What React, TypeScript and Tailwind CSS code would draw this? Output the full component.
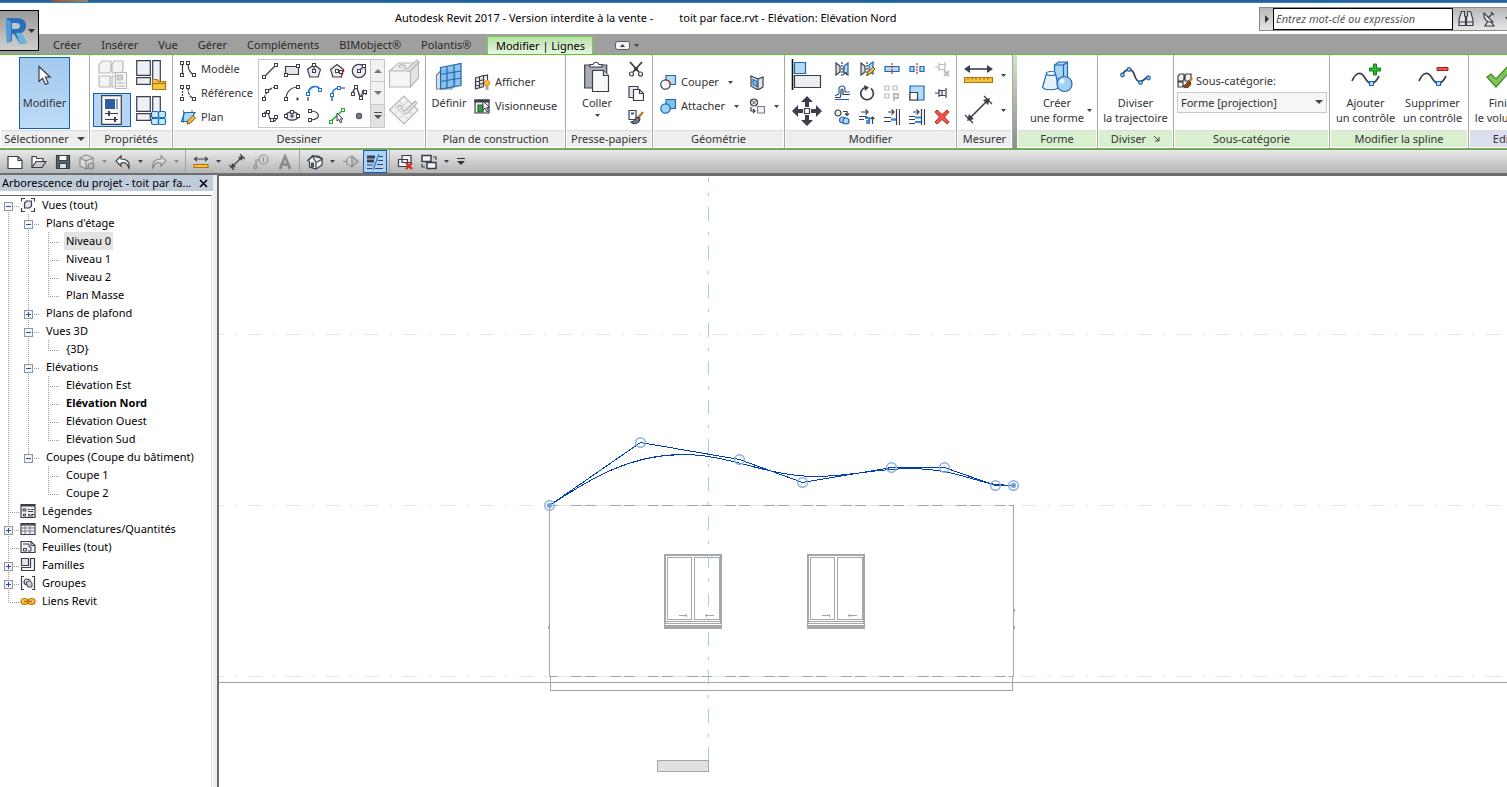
import { useState } from "react";
import type { ReactNode } from "react";
import clsx from "clsx";

const DARK = "#3a3f4b";
const BLUE = "#1b69b6";
const PALE = "#b5daf2";
const MUTE = "#b9b9b9";

interface IconProps {
  w?: number;
  h?: number;
  children: ReactNode;
}

function Icon({ w = 16, h = 16, children }: IconProps) {
  return (
    <svg
      width={w}
      height={h}
      viewBox={`0 0 ${w} ${h}`}
      fill="none"
      stroke={DARK}
      strokeWidth={1.2}
      className="shrink-0"
      aria-hidden="true"
    >
      {children}
    </svg>
  );
}

// Small square handle used by the sketch icons
function Node({ x, y, c = DARK }: { x: number; y: number; c?: string }) {
  return <rect x={x - 1.5} y={y - 1.5} width={3} height={3} fill="#fff" stroke={c} strokeWidth={1} />;
}

function Caret({ muted = false }: { muted?: boolean }) {
  return (
    <svg width={5} height={3} viewBox="0 0 5 3" className="shrink-0" aria-hidden="true">
      <path d="M0 0h5L2.5 3z" fill={muted ? "#8a8a8a" : "#444"} />
    </svg>
  );
}

/* ---------- ribbon icons ---------- */

const cursorIcon = (
  <Icon w={16} h={22}>
    <path d="M2 1.5v15l3.6-3.2 2.8 6.2 2.8-1.3-2.8-6h4.8z" fill="#fff" />
  </Icon>
);

const familyTypesIcon = (
  <Icon w={32} h={32}>
    <g stroke={MUTE} fill="#f4f4f4" strokeLinejoin="round">
      <path d="M2 6l3-4h9v9l-2 3H2zM15 6l2-4h9v9l-2 3h-9z" />
      <path d="M2 17h11v11H3l-1-2zM15 17h9v11h-9z" />
      <path d="M18.5 13.5h11v16h-11z" fill="#fafafa" />
      <path d="M20.5 16h5v5h-5z" fill="#d2d2d2" />
      <path d="M20 24h8M20 27h8M23 23v2M25 26v2" />
    </g>
  </Icon>
);

function PanesBase() {
  return (
    <g fill="#eef0f5">
      <path d="M1.7 1.7h13.6v14.6H1.7z" />
      <path d="M17.7 1.7h7.6v23.6h-7.6z" />
      <path d="M1.7 18.7h13.6v6.6H1.7z" />
    </g>
  );
}

const familyFolderIcon = (
  <Icon w={32} h={32}>
    <PanesBase />
    <path d="M17.5 30.5V20.5h4.5l1.5 2h7v8z" fill="#f3c648" stroke="#b0750e" />
    <path d="M18 24.5h12.5" stroke="#b0750e" />
  </Icon>
);

const propertiesIcon = (
  <Icon w={24} h={32}>
    <path d="M1.7 1.7h19.6v28.6H1.7z" fill="#fafafa" />
    <path d="M5 5h10v10H5z" fill="#2d5f9e" stroke="none" />
    <path d="M16 5h2v10h-2z" fill="#8ba6c8" stroke="none" />
    <path d="M5 19.5h13M5 25.5h13" />
    <path d="M9 17v5M15 23v5" strokeWidth={2} />
  </Icon>
);

const familyCategoriesIcon = (
  <Icon w={32} h={32}>
    <PanesBase />
    <g fill="#c9ecfb" stroke={BLUE}>
      <rect x="16.5" y="16.5" width="7" height="6" rx="1.5" />
      <rect x="23.5" y="16.5" width="7" height="6" rx="1.5" />
      <rect x="16.5" y="23.5" width="7" height="6" rx="1.5" />
      <rect x="23.5" y="23.5" width="7" height="6" rx="1.5" />
    </g>
  </Icon>
);

const modelIcon = (
  <Icon>
    <path d="M2.5 3v11M8 3c0 6 2 9 6 11" />
    <Node x={2} y={2} /><Node x={2} y={14} /><Node x={8} y={2} /><Node x={14} y={14} />
  </Icon>
);

const referenceIcon = (
  <Icon>
    <path d="M2.5 3v11" strokeDasharray="2 1" />
    <path d="M8 3c0 6 2 9 6 11" strokeDasharray="3 1" />
    <Node x={2} y={2} /><Node x={2} y={14} /><Node x={8} y={2} /><Node x={14} y={14} />
  </Icon>
);

const planIcon = (
  <Icon>
    <path d="M4.5 3.5h10l-3 9h-10z" fill="#a9d8f5" stroke={BLUE} />
    <path d="M3.5 1v13M1 12.5h11M12 3V1M16 3.5h-3" strokeWidth={0.8} stroke={BLUE} />
    <path d="M7 15l1-3.5 5-5 2.5 2.5-5 5z" fill="#f5b83a" stroke="#8d5713" strokeWidth={1} />
  </Icon>
);

const drawIcons: { label: string; art: ReactNode }[] = [
  { label: "Ligne", art: <><path d="M2 14L14 2" /><Node x={2} y={14} /><Node x={14} y={2} /></> },
  { label: "Rectangle", art: <><path d="M1.5 3.5h13v8h-13z" fill="#e4e6ec" /><Node x={2} y={12} /><Node x={14} y={3} /></> },
  { label: "Polygone inscrit", art: <><path d="M8 1.5l6.5 5-2.4 7.5H3.9L1.5 6.5z" fill="#e9ebf0" /><path d="M8 2v6" /><Node x={8} y={2} /><Node x={8} y={8} /></> },
  { label: "Polygone circonscrit", art: <><path d="M8 1.5l6.5 5-2.4 7.5H3.9L1.5 6.5z" fill="#e9ebf0" /><path d="M9 8l4 2" /><path d="M15 7l-3 8" stroke="#e11" strokeDasharray="2 1" /><Node x={8} y={8} /><Node x={12} y={9} /></> },
  { label: "Cercle", art: <><circle cx="8" cy="8" r="6.7" fill="#e9ebf0" /><path d="M8 8l4-4" /><Node x={8} y={8} /><Node x={13} y={3} /></> },
  { label: "Arc début-fin-rayon", art: <><path d="M2 14C3 8 7 3 14 2" strokeDasharray="4 1" /><Node x={2} y={14} /><Node x={5} y={6} /><Node x={14} y={2} /></> },
  { label: "Arc centre et extrémités", art: <><path d="M2 14C2 7 7 2 14 2M12 14h3M13.5 12.5v3" /><Node x={2} y={14} /><Node x={14} y={2} /></> },
  { label: "Arc tangent", art: <><path d="M2 10C2 0 14-1 14 6" stroke="#1c77cf" strokeWidth={1.6} /><path d="M2 12v4" /><Node x={2} y={9} c="#1c77cf" /><Node x={14} y={5} c="#1c77cf" /></> },
  { label: "Arc de congé", art: <><path d="M3 11C3 6 6 3 10 3" stroke="#1c77cf" strokeWidth={1.6} /><path d="M3 12v4M12 3h4" /><Node x={3} y={10} c="#1c77cf" /><Node x={10} y={3} c="#1c77cf" /></> },
  { label: "Spline", art: <><path d="M1 9c3-8 5-8 6-3s3 9 4 3 2-4 4 1" /><path d="M1 9l4-7 5 10 5-5" strokeWidth={0.8} /><Node x={2} y={9} /><Node x={5} y={2} /><Node x={10} y={13} /><Node x={14} y={7} /></> },
  { label: "Spline par points", art: <><path d="M1 8c2-6 5-5 6 0s5 8 8 2" /><Node x={2} y={7} /><Node x={6} y={4} /><Node x={10} y={12} /><Node x={14} y={9} /></> },
  { label: "Ellipse", art: <><ellipse cx="8" cy="8" rx="6.5" ry="4.2" fill="#e9ebf0" /><path d="M8 6v4M6 8h4" /><Node x={8} y={4} /><Node x={14} y={8} /><Node x={2} y={8} /></> },
  { label: "Ellipse partielle", art: <><path d="M4 3c10 0 12 8 1 9" /><Node x={4} y={3} /><Node x={4} y={12} /></> },
  { label: "Choisir des lignes", art: <><path d="M1 14L14 2" stroke="#1fae2c" strokeWidth={1.6} /><Node x={2} y={14} c="#1fae2c" /><Node x={14} y={2} c="#1fae2c" /><path d="M8 5v8l2-1.6 1.4 3.4 1.5-.7-1.4-3.2H14z" fill="#fff" strokeWidth={1} /></> },
  { label: "Point", art: <circle cx="8" cy="8" r="2.6" fill="#7c828c" stroke="#555a63" /> },
];

const drawOnFaceIcon = (
  <Icon w={32} h={32}>
    <g stroke={MUTE} fill="#f1f1f1">
      <path d="M1.5 13l9-8h20l-8 8z" />
      <path d="M1.5 13h21v16h-21z" fill="#f5f5f5" />
      <path d="M22.5 29l8-9V5l-8 8z" fill="#e4e4e4" />
      <path d="M11 10c-1-3 2-4 5-3s-1 4 3 4l10-9 2 2-9 9-3 0" fill="#e2e2e2" />
    </g>
  </Icon>
);

const drawOnWorkplaneIcon = (
  <Icon w={32} h={32}>
    <g stroke={MUTE}>
      <path d="M1.5 16L16 2l14 14-14 14z" fill="#f1f1f1" />
      <path d="M6 11l14 14M11 7l14 14M6 21L20 7M11 25L25 11" strokeWidth={0.7} />
      <path d="M9 13c2-3 5-2 5 1s2 4 5 1l8-8 2 2-9 10-4 1" fill="#e2e2e2" />
    </g>
  </Icon>
);

const setPlaneIcon = (
  <Icon w={28} h={30}>
    <path d="M1.5 13l4-4h15v13l-4 5h-15z" fill="#dfe4ec" stroke="#7a8494" />
    <path d="M5.5 5.5L26 1.5v22L5.5 27z" fill="#73b6e6" fillOpacity={0.8} stroke={BLUE} />
    <path d="M12 4.2v22M19 3v22M5.5 12.5L26 9M5.5 19.5l20.5-3.5" stroke={BLUE} />
  </Icon>
);

const showPlaneIcon = (
  <Icon>
    <path d="M1.5 4l8-2.5v11L1.5 15zM1.5 8l9-2.5M1.5 11.5l9-2.5M5.5 3v11M9.5 2l4-1v5" fill="#ececec" />
    <circle cx="13" cy="9" r="2.5" fill="#ffc43c" stroke="#f08a1c" />
    <path d="M11.5 13h3M11.5 15h3" stroke="#555" />
  </Icon>
);

const viewerIcon = (
  <Icon>
    <path d="M1 2h14v13H1z" fill="#eceef0" />
    <path d="M1 2h14v2H1z" fill={DARK} />
    <path d="M4 7h5v7H4z" fill="#3c9a48" stroke="#1c6e2a" />
    <path d="M9 3v9l2-2 2 4 1.5-.8-2-3.7h3z" fill="#fff" strokeWidth={1} />
  </Icon>
);

const pasteIcon = (
  <Icon w={28} h={32}>
    <path d="M1.7 4h22v23h-22z" fill="#a9adb6" />
    <path d="M7 6V3.5h3c1-3 5-3 6 0h3V6z" fill="#fff" />
    <path d="M9.5 9.5h11l5 5v16h-16z" fill="#f7f8fa" />
    <path d="M20.5 9.5v5h5" fill="#dcdfe5" />
  </Icon>
);

const cutIcon = (
  <Icon>
    <path d="M2 1l9 10M14 1L5 11" strokeWidth={1.8} />
    <circle cx="3.5" cy="13" r="2" /><circle cx="12.5" cy="13" r="2" />
    <circle cx="8" cy="8" r="1.4" fill={DARK} />
  </Icon>
);

const copyIcon = (
  <Icon>
    <path d="M1 1.5h9v11H1z" fill="#e8e9ed" />
    <path d="M5.5 4.5h6l4 4v7h-10z" fill="#fff" /><path d="M11.5 4.5v4h4" />
  </Icon>
);

const matchIcon = (
  <Icon>
    <path d="M1 1.5h7v9H1z" fill="#fff" /><path d="M3 3.5h3v2H3z" fill={BLUE} stroke="none" />
    <path d="M15 3l-5 6" stroke="#c07a2c" strokeWidth={2.4} />
    <path d="M10 8c-3 0-3 5-7 5 2 3 8 2 9-3z" fill="#737985" />
  </Icon>
);

const cutGeometryIcon = (
  <Icon>
    <path d="M6 1.5h9.5v9H6z" fill={PALE} stroke={BLUE} />
    <circle cx="5.5" cy="10.5" r="4.7" fill="#fff" />
    <path d="M5.5 5.8a4.7 4.7 0 0 1 4.7 4.7" stroke="#e21a1a" />
  </Icon>
);

const joinGeometryIcon = (
  <Icon>
    <path d="M6 1.5h9.5v9H6z" fill="#7fc0ea" stroke={BLUE} />
    <circle cx="5.5" cy="10.5" r="4.7" fill="#9ed2f2" stroke={BLUE} />
  </Icon>
);

const copingIcon = (
  <Icon>
    <path d="M2 2l7 3 5-2v10l-5 3-7-4zM9 5v10" fill="#e4e6eb" />
    <path d="M4 5.5l4 2v5l-4-2z" fill="#8ac7ef" stroke={BLUE} />
  </Icon>
);

const splitFaceIcon = (
  <Icon>
    <circle cx="5" cy="4.5" r="3.5" fill="#eee" /><path d="M2.5 2l5 5M7.5 2l-5 5" strokeWidth={0.9} />
    <path d="M8.5 8.5h7v6.5h-7z" fill="#f2f2f4" stroke="#777d88" />
    <path d="M2 9v4h4M4 11l2 2-2 2" />
  </Icon>
);

const alignIcon = (
  <Icon w={32} h={32}>
    <path d="M1.5 0v31" stroke="#111" strokeWidth={1.6} />
    <path d="M3.5 3.5h11v11h-11z" fill={PALE} stroke={BLUE} />
    <path d="M3.5 16.5h26v12h-26z" fill="#eceef2" />
  </Icon>
);

const moveIcon = (
  <Icon w={32} h={32}>
    <g fill={DARK} stroke="none">
      <path d="M16 1l6 6h-4v5h-4V7h-4zM16 31l6-6h-4v-5h-4v5h-4zM1 16l6-6v4h5v4H7v4zM31 16l-6-6v4h-5v4h5v4z" />
    </g>
    <path d="M13.5 13.5h5v5h-5z" fill="#fff" />
  </Icon>
);

const modifyIcons: { label: string; art: ReactNode; muted?: boolean }[] = [
  { label: "Symétrie - Choisir l'axe", art: <><path d="M2 2v12l4-3V5z" fill="#d9dce2" /><path d="M8 1v14" strokeDasharray="2 1" /><path d="M14 2v12l-4-3V5z" fill={PALE} stroke={BLUE} /><path d="M10 6v7l2-1.5 1 2.5" fill="#fff" /></> },
  { label: "Symétrie - Dessiner l'axe", art: <><path d="M2 2v12l4-3V5z" fill="#d9dce2" /><path d="M8 1v14" strokeDasharray="2 1" /><path d="M14 1v12l-4-3V4z" fill={PALE} stroke={BLUE} /><path d="M8 14l1-3 5-5 2 2-5 5z" fill="#f5b83a" stroke="#8d5713" strokeWidth={1} /></> },
  { label: "Scinder l'élément", art: <><path d="M1 5.5h14v5H1z" fill={PALE} stroke={BLUE} /><path d="M8 2v12" stroke="#d22" strokeDasharray="2 1" /></> },
  { label: "Scinder avec espace", art: <><path d="M1 5.5h4v5H1zM11 5.5h4v5h-4z" fill={PALE} stroke={BLUE} /><path d="M8 2v12" stroke="#d22" strokeDasharray="2 1" /></> },
  { label: "Déverrouiller", muted: true, art: <><path d="M1 6h4M5 2v8M5 3.5h6M5 8.5h6M11 1v9" /><path d="M10 10l5 5M15 10l-5 5" strokeWidth={2} /></> },
  { label: "Décaler", art: <><path d="M1 14.5h14M1 11c1-2 4 0 4-3V4c0-4 6-4 6 0v3h5" stroke={BLUE} /><path d="M1 12.5h5c1-1 1-3 1-7 0-2 2-2 2 0v4h7" /></> },
  { label: "Rotation", art: <><path d="M12 3.5A6.3 6.3 0 1 1 6 2.5" strokeWidth={1.7} /><path d="M5 0l5 2.5L6 6z" fill={DARK} stroke="none" /></> },
  { label: "Réseau", muted: true, art: <><path d="M1 1h4v4H1zM9 1h4v4H9zM1 9h4v4H1z" /><path d="M10 16V9h4v4h-4" strokeWidth={2} /></> },
  { label: "Echelle", art: <><path d="M1 1h14v14H1z" fill={PALE} stroke={BLUE} /><path d="M1 7.5h7.5V15H1z" fill="#fff" /></> },
  { label: "Verrouiller", art: <><path d="M1 8h4M5 4v8M5 5.5h6M5 10.5h6M12 3v10M8 6v4" /></> },
  { label: "Copier", art: <><circle cx="4" cy="4" r="3" fill="#eee" /><circle cx="8.5" cy="11" r="3" fill={PALE} stroke={BLUE} /><circle cx="12" cy="12" r="3" fill={PALE} stroke={BLUE} /><path d="M9 2.5h4v4M11 4.5l2 2 2-2" /></> },
  { label: "Ajuster en angle", art: <><path d="M2 3h7M6.5.5L9 3 6.5 5.5" /><path d="M0 7.5h8M0 10.5h5M8 15v-4" /><path d="M6 9h4v6" stroke="#2c8ce0" strokeWidth={2} /><path d="M13.5 15V8M11.5 10l2-2 2 2" /></> },
  { label: "Ajuster un élément", art: <><path d="M4 3h6M7.5.5L10 3 7.5 5.5M12.5 0v16M15.5 0v16M0 8.5h7M0 12.5h7" /><path d="M7 10.5h5" stroke="#2c8ce0" strokeWidth={2.4} /></> },
  { label: "Ajuster plusieurs éléments", art: <><path d="M4 3h6M7.5.5L10 3 7.5 5.5M12.5 0v16M15.5 0v16M0 7.5h6M0 10.5h6M0 14.5h6" /><path d="M6 8.5h6M6 13h6" stroke="#2c8ce0" strokeWidth={2} /></> },
  { label: "Supprimer", art: <><path d="M3 1l5 4.5L13 1l2 2-4.5 5 4.5 5-2 2-5-4.5L3 15l-2-2 4.5-5L1 3z" fill="#ef5548" stroke="#b3261c" strokeWidth={1} /></> },
];

const measureIcon = (
  <Icon w={32} h={22}>
    <path d="M3 5h25" strokeWidth={1.6} />
    <path d="M1 5l6-4v8zM30 5l-6-4v8z" fill={DARK} stroke="none" />
    <path d="M1.5 13.5h28v5h-28z" fill="#f6c13c" stroke="#b0750e" />
    <path d="M5 14v2M9 14v2M13 14v2M17 14v2M21 14v2M25 14v2" stroke="#b0750e" strokeWidth={1} />
  </Icon>
);

const dimensionIcon = (
  <Icon w={32} h={32}>
    <path d="M6 25L25 6" strokeWidth={1.6} />
    <path d="M2 21l8 8M21 2l8 8" />
    <path d="M4 27l2-7 5 5zM27 4l-7 2 5 5z" fill={DARK} stroke="none" />
  </Icon>
);

const createFormIcon = (
  <Icon w={32} h={32}>
    <path d="M13.5 4l4-3h9v17h-13z" fill="#a9d5f1" stroke={BLUE} />
    <path d="M13.5 4h9v14M22.5 4l4-3" stroke={BLUE} />
    <path d="M5.5 12.5h9l3 14c-2 3-14 3-16 0z" fill="#e6f2fa" stroke={BLUE} />
    <ellipse cx="10" cy="12.5" rx="4.5" ry="2" fill="#fff" stroke={BLUE} />
    <circle cx="23.5" cy="23" r="7.5" fill="#a4d1f0" stroke={BLUE} />
    <circle cx="21" cy="20" r="2.5" fill="#e6f5fd" stroke="none" />
  </Icon>
);

const dividePathIcon = (
  <Icon w={32} h={20}>
    <path d="M2 8c4-7 10-7 12-1s4 9 8 7 4-4 7-5" strokeWidth={1.7} />
    <g fill="#9fd1f4" stroke={BLUE}>
      <circle cx="2.5" cy="8" r="1.8" /><circle cx="9" cy="2.5" r="1.8" />
      <circle cx="20.5" cy="15.5" r="1.8" /><circle cx="28.5" cy="11" r="1.8" />
    </g>
  </Icon>
);

const subcategoryIcon = (
  <Icon>
    <path d="M1 3l2-2h4v5l-1 2H1zM8 3l1-2h5v5l-1 2H8zM1 9h5v5H1z" fill="#f1f1f1" />
    <path d="M15 5l-3 4" stroke="#c07a2c" strokeWidth={2.2} />
    <path d="M12 8c-2 0-3 5-6 5 2 3 7 2 8-3z" fill="#8b4b1f" stroke="#5b2f10" strokeWidth={1} />
  </Icon>
);

function SplineIcon({ add = false }: { add?: boolean }) {
  return (
    <Icon w={32} h={28}>
      <path d="M2 18c4-9 9-10 13-3 3 5 8 10 14-2" strokeWidth={1.7} />
      <path d="M19.5 18.5h4v4h-4z" fill="#b7e2fb" stroke={BLUE} />
      {add ? (
        <path d="M23.5 1v4h-4v3h4v4h3V8h4V5h-4V1z" fill="#2fb82f" stroke="#128212" strokeWidth={1} />
      ) : (
        <path d="M20 4.5h11v3H20z" fill="#ef5548" stroke="#a11d1d" strokeWidth={1} />
      )}
    </Icon>
  );
}

const checkIcon = (
  <Icon w={28} h={24}>
    <path d="M1 12l4-3 5 5L22 1l4 3-16 18z" fill="#7fc45a" stroke="#3c8a25" />
  </Icon>
);

/* ---------- ribbon pieces ---------- */

type Tone = "plain" | "green" | "violet";

interface PanelProps {
  title: string;
  width: string;
  tone?: Tone;
  mark?: ReactNode;
  children: ReactNode;
}

function Panel({ title, width, tone = "plain", mark, children }: PanelProps) {
  return (
    <section className={clsx("flex shrink-0 flex-col border-r border-[#a3aaa0] bg-white", width)}>
      <div className="flex h-[75px]">{children}</div>
      <h2
        className={clsx(
          "mx-px flex h-[17px] items-center justify-center gap-2 border-t border-[#dcdcdc] leading-4 whitespace-nowrap",
          tone === "plain" && "bg-[#eeeeee]",
          tone === "green" && "bg-[#d9efcd]",
          tone === "violet" && "bg-[#dcdff0]",
        )}
      >
        {title}
        {mark}
      </h2>
    </section>
  );
}

function ToolRow({ icon, label, caret = false }: { icon: ReactNode; label?: string; caret?: boolean }) {
  return (
    <button type="button" className="flex h-6 items-center gap-[5px] whitespace-nowrap" aria-label={label ?? "Outil"}>
      {icon}
      {label}
      {caret && <span className="ml-1"><Caret /></span>}
    </button>
  );
}

function BigTool({ icon, lines, className }: { icon: ReactNode; lines: string[]; className?: string }) {
  return (
    <button type="button" className={clsx("flex flex-col items-center pt-1 leading-[15px] whitespace-nowrap", className)}>
      <span className="flex h-9 items-center">{icon}</span>
      {lines.map((line) => (
        <span key={line}>{line}</span>
      ))}
    </button>
  );
}

const tabs = ["Créer", "Insérer", "Vue", "Gérer", "Compléments", "BIMobject®", "Polantis®"];

function Header() {
  return (
    <header className="relative shrink-0">
      <div className="h-[3px] border-b border-[#1d86dc] bg-[#2c5f98] pl-[52px]">
        <div className="h-0.5 w-9 bg-linear-to-r from-[#9c4b45] to-[#8a8a6a]" />
      </div>
      <div className="flex h-[31px] items-center bg-white">
        <h1 className="ml-[395px] flex-1 pb-0.5 text-black whitespace-pre">
          Autodesk Revit 2017 - Version interdite à la vente -<span className="ml-[26px]">toit par face.rvt - Elévation: Elévation Nord</span>
        </h1>
        <div className="flex h-6 w-[248px] shrink-0 items-center border border-r-0 border-[#8a8a8a] bg-linear-to-b from-[#b8b8b8] to-[#e6e6e6]">
          <button type="button" aria-label="Afficher la recherche" className="flex w-[13px] shrink-0 justify-center">
            <svg width="4" height="8"><path d="M0 0l4 4-4 4z" fill="#333" /></svg>
          </button>
          <input
            type="text"
            aria-label="Recherche"
            placeholder="Entrez mot-clé ou expression"
            className="h-[22px] w-[180px] shrink-0 border border-black bg-white px-0.5 italic placeholder:text-[#555]"
          />
          <button type="button" aria-label="Rechercher" className="ml-1">
            <Icon w={18} h={18}>
              <path d="M4.5 1.5h3v4l1 2v8H2v-6zM13.5 1.5h-3v4l-1 2v8H16v-6z" fill="#e4e4e4" />
              <path d="M2 12h6M10 12h6M8 7h2" />
            </Icon>
          </button>
          <button type="button" aria-label="Centre de communication" className="ml-1.5">
            <Icon w={18} h={18}>
              <path d="M3 3c-1 6 3 10 9 9zM7 8l5-5M10 2l3 3M7 11l-3 5h9l-3-4" fill="#e4e4e4" />
            </Icon>
          </button>
          <span className="ml-1.5"><Caret /></span>
        </div>
      </div>
      <nav className="flex h-5 items-end bg-[#9f9f9f] pl-[43px] text-[#2b2b2b]">
        {tabs.map((tab) => (
          <button key={tab} type="button" className="h-[18px] px-2.5 leading-[16px]">
            {tab}
          </button>
        ))}
        <button
          type="button"
          className="ml-1.5 h-[18px] w-[106px] border border-b-0 border-[#6fd648] bg-linear-to-b from-[#b9dfaa] to-[#e6f8de] leading-[14px] text-black"
        >
          Modifier | Lignes
        </button>
        <button type="button" aria-label="Réduire le ruban" className="ml-[22px] flex h-[18px] items-center gap-1">
          <Icon w={15} h={9}>
            <rect x=".5" y=".5" width="14" height="8" rx="2" fill="#f0f2f5" stroke="#555b66" strokeWidth={1} />
            <path d="M5 6h5L7.5 3z" fill={DARK} stroke="none" />
          </Icon>
          <Caret />
        </button>
      </nav>
      <button
        type="button"
        aria-label="Menu de l'application"
        className="absolute top-2.5 left-0 flex h-[41px] w-[39px] items-center border border-l-0 border-black bg-linear-to-b from-[#9a9a9a] to-[#cfcfcf] pl-1"
      >
        <svg width="24" height="28" viewBox="0 0 24 28" aria-hidden="true">
          <path d="M2 1h11c7 0 9 4 9 8 0 3-2 6-5 7l6 10-7 1-6-10H8v7l-5 2z" fill="#2b6fb8" />
          <path d="M2 1l5 4v19l-4 2z" fill="#4f9bdc" />
          <path d="M8 6h4c3 0 4 1 4 3s-1 3-4 3H8z" fill="#bcc6cf" />
          <path d="M12 16l5 0 6 10-7 1z" fill="#69b7d6" />
        </svg>
        <svg width="7" height="4"><path d="M0 0h7L3.500 4z" fill="#333" /></svg>
      </button>
    </header>
  );
}

function Ribbon() {
  const [category, setCategory] = useState("Forme [projection]");

  return (
    <div className="flex h-[95px] shrink-0 overflow-hidden border-y border-[#5cc52f] bg-white text-[#333333]">
      <Panel title="Sélectionner" width="w-[90px]" mark={<svg width="8" height="4"><path d="M0 0h8L4 4z" fill="#444" /></svg>}>
        <button
          type="button"
          className="mt-0.5 ml-[19px] flex h-[72px] w-[51px] flex-col items-center border border-[#1161b3] bg-linear-to-b from-[#a3c9ee] to-[#bcdcf7] pt-[7px]"
        >
          {cursorIcon}
          <span className="mt-2">Modifier</span>
        </button>
      </Panel>

      <Panel title="Propriétés" width="w-[83px]">
        <div className="mt-0.5 ml-[3px] grid grid-cols-[38px_34px] grid-rows-[36px_36px] gap-x-1">
          <button type="button" aria-label="Types de famille" className="pl-1">{familyTypesIcon}</button>
          <button type="button" aria-label="Catégorie et paramètres">{familyFolderIcon}</button>
          <button
            type="button"
            aria-label="Propriétés"
            className="flex h-[34px] items-center justify-center border border-[#1161b3] bg-[#b4d5f3]"
          >
            {propertiesIcon}
          </button>
          <button type="button" aria-label="Types">{familyCategoriesIcon}</button>
        </div>
      </Panel>

      <Panel title="Dessiner" width="w-[253px]">
        <div className="mt-0.5 ml-[7px] w-[78px]">
          <ToolRow icon={modelIcon} label="Modèle" />
          <ToolRow icon={referenceIcon} label="Référence" />
          <ToolRow icon={planIcon} label="Plan" />
        </div>
        <div className="mt-1 flex h-[69px] w-[127px] border border-[#c6c6c6]">
          <div className="grid flex-1 grid-cols-5 grid-rows-3">
            {drawIcons.map(({ label, art }) => (
              <button key={label} type="button" aria-label={label} className="flex items-center justify-center">
                <Icon>{art}</Icon>
              </button>
            ))}
          </div>
          <div className="grid w-3.5 grid-rows-3 divide-y divide-[#c6c6c6] border-l border-[#c6c6c6] bg-[#f1f1f1]">
            <button type="button" aria-label="Défiler vers le haut" className="flex items-center justify-center">
              <svg width="8" height="4"><path d="M0 4h8L4 0z" fill="#777" /></svg>
            </button>
            <button type="button" aria-label="Défiler vers le bas" className="flex items-center justify-center">
              <svg width="8" height="4"><path d="M0 0h8L4 4z" fill="#777" /></svg>
            </button>
            <button type="button" aria-label="Développer" className="flex items-center justify-center bg-[#e2e2e2]">
              <svg width="8" height="7"><path d="M0 0h8v1H0zM0 3h8L4 7z" fill="#555" /></svg>
            </button>
          </div>
        </div>
        <div className="ml-[3px] flex flex-col gap-1 pt-[3px]">
          <button type="button" aria-label="Dessiner sur la face">{drawOnFaceIcon}</button>
          <button type="button" aria-label="Dessiner sur le plan">{drawOnWorkplaneIcon}</button>
        </div>
      </Panel>

      <Panel title="Plan de construction" width="w-[140px]">
        <BigTool icon={setPlaneIcon} lines={["Définir"]} className="ml-1 w-[38px]" />
        <div className="mt-[15px] ml-1.5">
          <ToolRow icon={showPlaneIcon} label="Afficher" />
          <ToolRow icon={viewerIcon} label="Visionneuse" />
        </div>
      </Panel>

      <Panel title="Presse-papiers" width="w-[87px]">
        <div className="ml-3 flex w-[38px] flex-col items-center">
          <BigTool icon={pasteIcon} lines={["Coller"]} />
          <span className="mt-1"><Caret /></span>
        </div>
        <div className="mt-0.5 ml-3">
          <ToolRow icon={cutIcon} />
          <ToolRow icon={copyIcon} />
          <ToolRow icon={matchIcon} />
        </div>
      </Panel>

      <Panel title="Géométrie" width="w-[132px]">
        <div className="mt-[15px] ml-[7px] w-[89px]">
          <ToolRow icon={cutGeometryIcon} label="Couper" caret />
          <ToolRow icon={joinGeometryIcon} label="Attacher" caret />
        </div>
        <div className="mt-[15px]">
          <ToolRow icon={copingIcon} />
          <ToolRow icon={splitFaceIcon} caret />
        </div>
      </Panel>

      <Panel title="Modifier" width="w-[172px]">
        <div className="ml-1.5 flex w-9 flex-col gap-1 pt-1">
          <button type="button" aria-label="Aligner">{alignIcon}</button>
          <button type="button" aria-label="Déplacer">{moveIcon}</button>
        </div>
        <div className="mt-0.5 ml-0.5 grid h-[72px] w-[125px] grid-cols-5 grid-rows-3">
          {modifyIcons.map(({ label, art, muted }) => (
            <button
              key={label}
              type="button"
              aria-label={label}
              className={clsx("flex items-center justify-center", muted && "opacity-35")}
            >
              <Icon>{art}</Icon>
            </button>
          ))}
        </div>
      </Panel>

      <Panel title="Mesurer" width="w-[56px]">
        <div className="ml-1.5 flex flex-col gap-2 pt-[9px]">
          <button type="button" aria-label="Mesurer" className="flex items-center gap-1.5">{measureIcon}<Caret /></button>
          <button type="button" aria-label="Cote alignée" className="flex items-center gap-1.5">{dimensionIcon}<Caret /></button>
        </div>
      </Panel>

      <div className="w-1 shrink-0 bg-linear-to-b from-[#cfe5c6] to-[#8d8d8d]" />

      <Panel title="Forme" width="w-[81px]" tone="green">
        <BigTool icon={createFormIcon} lines={["Créer", "une forme"]} className="w-[80px]" />
        <span className="-ml-2.5 pt-[54px]"><Caret /></span>
      </Panel>

      <Panel
        title="Diviser"
        width="w-[76px]"
        tone="green"
        mark={<svg width="6" height="6"><path d="M0 0l5 5M5 1v4H1" stroke="#444" fill="none" /></svg>}
      >
        <BigTool icon={dividePathIcon} lines={["Diviser", "la trajectoire"]} className="w-full" />
      </Panel>

      <Panel title="Sous-catégorie" width="w-[156px]" tone="green">
        <div className="flex flex-1 flex-col gap-[3px] pt-[18px] pr-0.5 pl-[3px]">
          <label htmlFor="subcategory" className="flex h-4 items-center gap-[3px]">
            {subcategoryIcon}
            Sous-catégorie:
          </label>
          <div className="relative">
            <select
              id="subcategory"
              value={category}
              onChange={(e) => setCategory(e.target.value)}
              className="h-[21px] w-full appearance-none border border-[#c9c9c9] bg-[#f6f6f6] pl-[3px] leading-[18px]"
            >
              <option>Forme [projection]</option>
            </select>
            <svg width="8" height="4" className="pointer-events-none absolute top-2 right-1"><path d="M0 0h8L4 4z" fill="#444" /></svg>
          </div>
        </div>
      </Panel>

      <Panel title="Modifier la spline" width="w-[139px]" tone="green">
        <BigTool icon={<SplineIcon add />} lines={["Ajouter", "un contrôle"]} className="ml-0.5 w-[67px]" />
        <BigTool icon={<SplineIcon />} lines={["Supprimer", "un contrôle"]} className="w-[67px]" />
      </Panel>

      <Panel title="Editeur in situ" width="w-[120px]" tone="violet">
        <BigTool icon={checkIcon} lines={["Finir", "le volume"]} className="w-[62px]" />
      </Panel>
    </div>
  );
}

/* ---------- quick access bar ---------- */

type QuickItem = { kind: "tool"; label: string; art: ReactNode; muted?: boolean; caret?: boolean; active?: boolean } | { kind: "sep" };

const quickItems: QuickItem[] = [
  { kind: "tool", label: "Nouveau", art: <><path d="M1 2.5h10l4 4v8H1z" fill="#fff" /><path d="M11 2.5v4h4" /></> },
  { kind: "tool", label: "Ouvrir", art: <><path d="M1 13.5v-11h4l1 2h6v3" fill="#fff" /><path d="M1 13.5l4-6h10l-4 6z" fill="#c3c7cf" /></> },
  { kind: "tool", label: "Enregistrer", art: <><path d="M1.5 1.5h13v13h-13z" fill="#5b6270" /><path d="M4 1.5h8v5H4z" fill="#fff" /><path d="M4.5 9.5h7v5h-7z" fill="#dfe2e7" /></> },
  { kind: "tool", label: "Synchroniser", muted: true, caret: true, art: <><path d="M1 4l6-3 7 3v7l-7 4-6-3zM1 4l6 3 7-3M7 7v8" fill="#eee" /><circle cx="12" cy="12" r="3" fill="#aaa" /></> },
  { kind: "tool", label: "Annuler", caret: true, art: <path d="M6 2L1 7l5 5V9c4-1 6 0 8 5 1-6-2-9-8-9z" fill="#fff" /> },
  { kind: "tool", label: "Rétablir", muted: true, caret: true, art: <path d="M10 2l5 5-5 5V9c-4-1-6 0-8 5C1 8 4 5 10 5z" fill="#eee" /> },
  { kind: "sep" },
  { kind: "tool", label: "Mesurer", caret: true, art: <><path d="M2 5h12M4 3L1.5 5 4 7M12 3l2.5 2L12 7" /><path d="M1 10.5h14v3H1z" fill="#f6c13c" stroke="#b0750e" /></> },
  { kind: "tool", label: "Cote alignée", art: <><path d="M3 13L13 3M0 11l5 5M11 0l5 5" /><path d="M2 14l1-5 4 4zM14 2L9 3l4 4z" fill={DARK} stroke="none" /></> },
  { kind: "tool", label: "Etiquette", muted: true, art: <><circle cx="10.5" cy="5.5" r="4.5" /><path d="M10.5 3v5M6 6H3v6" /><circle cx="2.5" cy="13" r="1.5" /></> },
  { kind: "tool", label: "Texte", muted: true, art: <path d="M3 15L8 2l5 13M5 10.5h6" strokeWidth={2.6} /> },
  { kind: "sep" },
  { kind: "tool", label: "Vue 3D", caret: true, art: <><path d="M0.5 7l5-5L15 4.500v6.5l-6 4-6.5-2V7" fill="#eef0f3" /><path d="M0.5 7L5.5 2 9 8.5 15.5 5M9 8.5V15M5.5 2l6 0 4 3" /><path d="M4.5 9h2v4h-2z" fill="#5b6270" strokeWidth={1} /></> },
  { kind: "tool", label: "Coupe", muted: true, art: <><circle cx="8" cy="7.5" r="4.5" /><path d="M9 2l6 5.5L9 13V2z" fill="#aaa" /><path d="M0 7.5h3" /></> },
  { kind: "tool", label: "Lignes fines", active: true, art: <><path d="M0 3h8M0 7h7" strokeWidth={3} /><path d="M0 11h6M0 14.5h5M12 2.5h4M11 6.5h5M10 10.5h6M8 14.5h8" /><path d="M12 0L6 16" stroke="#1c77cf" /></> },
  { kind: "sep" },
  { kind: "tool", label: "Fermer les fenêtres cachées", art: <><path d="M5 1.5h9v7H5zM1.5 5.5h9v7h-9z" fill="#f3f3f5" /><path d="M9 9l6 6M15 9l-6 6" stroke="#d32a1e" strokeWidth={2.2} /></> },
  { kind: "tool", label: "Changer de fenêtre", caret: true, art: <><path d="M1 1.5h9v6H1zM6 8.5h9v6H6z" fill="#f3f3f5" strokeWidth={1.5} /><path d="M12 3h3v3M1 10v3h3" /></> },
];

function QuickBar() {
  return (
    <div className="flex h-[26px] shrink-0 items-center border-t border-b-2 border-t-[#8c8c8c] border-b-[#6e6e6e] bg-linear-to-b from-[#e9e9e9] to-[#b5b5b5] pl-[3px]">
      {quickItems.map((item, i) =>
        item.kind === "sep" ? (
          <span key={i} className="mr-[3px] ml-0.5 h-full w-px bg-[#a3a3a3]" />
        ) : (
          <button
            key={item.label}
            type="button"
            aria-label={item.label}
            className={clsx(
              "flex h-[23px] items-center",
              item.active ? "border border-[#1161b3] bg-[#aed3f4] px-0.5" : "px-[3px]",
            )}
          >
            <span className={clsx("mx-px", item.muted && "opacity-45")}><Icon>{item.art}</Icon></span>
            {item.caret && <span className="mr-px ml-1.5"><Caret muted={item.muted} /></span>}
          </button>
        ),
      )}
      <button type="button" aria-label="Personnaliser" className="ml-1">
        <svg width="8" height="7"><path d="M0 0h8v1H0zM0 3h8L4 7z" fill="#333" /></svg>
      </button>
    </div>
  );
}

/* ---------- project browser ---------- */

type Guide = "line" | "tee" | "end" | "start" | "none";

interface TreeRow {
  label: string;
  guides: Guide[];
  toggle?: "+" | "-";
  icon?: ReactNode;
  bold?: boolean;
  selected?: boolean;
}

const treeRows: TreeRow[] = [
  { label: "Vues (tout)", guides: ["start"], toggle: "-", icon: <><path d="M5 1.5H1.5v3M1.5 11v3.5H5M11 1.5h3.5v3M14.5 11v3.5H11" /><path d="M4.5 6l2-2h5v5l-2 2h-5z" fill="#dfe2e7" /></> },
  { label: "Plans d'étage", guides: ["line", "tee"], toggle: "-" },
  { label: "Niveau 0", guides: ["line", "line", "tee"], selected: true },
  { label: "Niveau 1", guides: ["line", "line", "tee"] },
  { label: "Niveau 2", guides: ["line", "line", "tee"] },
  { label: "Plan Masse", guides: ["line", "line", "end"] },
  { label: "Plans de plafond", guides: ["line", "tee"], toggle: "+" },
  { label: "Vues 3D", guides: ["line", "tee"], toggle: "-" },
  { label: "{3D}", guides: ["line", "line", "end"] },
  { label: "Elévations", guides: ["line", "tee"], toggle: "-" },
  { label: "Elévation Est", guides: ["line", "line", "tee"] },
  { label: "Elévation Nord", guides: ["line", "line", "tee"], bold: true },
  { label: "Elévation Ouest", guides: ["line", "line", "tee"] },
  { label: "Elévation Sud", guides: ["line", "line", "end"] },
  { label: "Coupes (Coupe du bâtiment)", guides: ["line", "end"], toggle: "-" },
  { label: "Coupe 1", guides: ["line", "none", "tee"] },
  { label: "Coupe 2", guides: ["line", "none", "end"] },
  { label: "Légendes", guides: ["tee"], icon: <><path d="M1 1.5h14v13H1z" fill="#f1f1f3" /><path d="M1 2.5h14" strokeWidth={2} /><path d="M3 6h3v2H3zM3.5 11h2v2h-2zM8 6.5h2M11 6.5h3M8 8.5h5M8 11.5h2M11 11.5h3M8 13h5" strokeWidth={1} /></> },
  { label: "Nomenclatures/Quantités", guides: ["tee"], toggle: "+", icon: <><path d="M1 2.5h14v11H1z" fill="#f1f1f3" /><path d="M1 3.5h14" strokeWidth={2} /><path d="M1 7h14M1 10h14M5 3v10M10 3v10" strokeWidth={1} stroke="#7b808a" /></> },
  { label: "Feuilles (tout)", guides: ["tee"], icon: <><path d="M1 2.5h10l4 4v7H1z" fill="#f1f1f3" /><path d="M11 2.5v4h4M3 5h6v3h2v4H8M3.5 9.5h3v2.5h-3z" strokeWidth={1} /></> },
  { label: "Familles", guides: ["tee"], toggle: "+", icon: <><path d="M1.5 1.5h7v7h-7z" fill="#e4e6ea" /><path d="M10.5 1.5h4v12h-13v-3h9z" fill="#f5f5f7" /></> },
  { label: "Groupes", guides: ["tee"], toggle: "+", icon: <><path d="M4 1.5H1.5v13H4M12 1.5h2.5v13H12" /><circle cx="7" cy="7" r="3" fill="#dfe2e7" /><path d="M6 7.5l4-2 2 2.5v4H8z" fill="#cfd3da" strokeWidth={1} /></> },
  { label: "Liens Revit", guides: ["end"], icon: <g stroke="#b77a0c" fill="#f8c63c"><rect x="1" y="5.5" width="7" height="6" rx="3" /><rect x="8" y="5.5" width="7" height="6" rx="3" /><path d="M4 8.5h8" strokeWidth={1.6} /></g> },
];

function GuideCell({ kind, toggle }: { kind: Guide; toggle?: "+" | "-" }) {
  return (
    <svg width="20" height="18" className="shrink-0" shapeRendering="crispEdges" aria-hidden="true">
      <g stroke="#9a9a9a" strokeDasharray="1 1">
        {(kind === "line" || kind === "tee") && <path d="M8.5 0v18" />}
        {kind === "end" && <path d="M8.5 0v10" />}
        {kind === "start" && <path d="M8.5 10v8" />}
        {kind !== "line" && kind !== "none" && <path d="M8 10.5h12" />}
      </g>
      {toggle && (
        <g stroke="#8f959f">
          <rect x="4.5" y="6.5" width="8" height="8" fill="#f2f4f7" />
          <path d={toggle === "+" ? "M6 10.5h5M8.5 8v5" : "M6 10.5h5"} stroke="#2f4d9c" />
        </g>
      )}
    </svg>
  );
}

function ProjectBrowser() {
  return (
    <aside className="flex w-[213px] shrink-0 flex-col bg-white text-black">
      <div className="flex h-4 shrink-0 items-center justify-between bg-[#bfcddb] pr-[5px] pl-0.5">
        <h2 className="whitespace-nowrap">Arborescence du projet - toit par fa...</h2>
        <button type="button" aria-label="Fermer">
          <svg width="9" height="9"><path d="M1 1l7 7M8 1L1 8" stroke="#000" strokeWidth="1.6" /></svg>
        </button>
      </div>
      <ul className="mt-1 mr-px flex-1 border-t border-r border-t-[#696969] border-r-[#e3e3e3]">
        {treeRows.map((row) => (
          <li key={row.label} className="flex h-[18px] items-center">
            {row.guides.map((kind, i) => (
              <GuideCell key={i} kind={kind} toggle={i === row.guides.length - 1 ? row.toggle : undefined} />
            ))}
            {row.icon && <Icon>{row.icon}</Icon>}
            <span
              className={clsx(
                "ml-1 px-0.5 leading-[18px] whitespace-nowrap",
                row.bold && "font-bold",
                row.selected && "bg-[#e3e3e3]",
              )}
            >
              {row.label}
            </span>
          </li>
        ))}
      </ul>
    </aside>
  );
}

/* ---------- elevation view ---------- */

const controlPoints = [
  [549, 505], [640, 442], [739, 459], [802, 482], [891, 467], [944, 467], [995, 485], [1013, 485],
];

function WindowShape({ x }: { x: number }) {
  return (
    <g transform={`translate(${x} 554)`}>
      <path d="M0 1h58" strokeWidth={2} />
      <path d="M1 0v70M57 0v70" strokeWidth={2} />
      <path d="M3.5 65.5V3.5h24v62zM30.5 3.5h25v62h-25z" />
      <path d="M0 67.5h58M0 69.5h58" />
      <path d="M0.5 67v7M57.5 67v7" />
      <path d="M0 73h58" strokeWidth={4} />
      <path d="M15 61.5h8M22.5 60v3M41 61.5h9M42.5 60v3" />
    </g>
  );
}

function ElevationView() {
  return (
    <main className="min-w-0 flex-1 overflow-hidden border-t border-l-2 border-[#6b6b6b] bg-white">
      <svg className="h-full w-full" role="img" aria-label="Elévation Nord">
        {/* view origin */}
        <g transform="translate(-219 -176)" fill="none" stroke="#a6a6a6" shapeRendering="crispEdges">
          <path d="M219 334.5h3000M219 505.5h3000M219 676.5h3000" stroke="#e6e6e6" strokeDasharray="14.5 10.5 3 10.7" strokeDashoffset={10} />
          <path d="M549.5 505v171.5M1013.5 505v171.5M1014.5 609v3M1014.5 626v3M548.5 626v3" />
          <path d="M549.5 505.5h464M549.5 676.5h464" strokeDasharray="11 3 11 13.5" strokeDashoffset={17} />
          <path d="M550.5 677v13.5h462V677" />
          <path d="M219 682.5h3000" />
          <WindowShape x={664} />
          <WindowShape x={807} />
          <rect x="657.5" y="760.5" width="51" height="11" fill="#e1e1e1" />
          <path d="M708.5 177v583" stroke="#9fcdfb" strokeDasharray="14 11 3 10.6" strokeDashoffset={8.6} />
          <g stroke="#003fb5">
            <polyline points={controlPoints.map(([x, y]) => `${x + 0.5},${y + 0.5}`).join(" ")} />
            <path d="M549.5 505.5C583 484 625 454.5 683 454.5c47 0 82 21.5 132 22 35 0 60-8 97-8 38 0 60 12 83 16l18 1" />
          </g>
          <g stroke="#8caede" shapeRendering="auto" strokeWidth={1.4}>
            {controlPoints.map(([x, y], i) => (
              <g key={x}>
                <circle cx={x + 0.5} cy={y + 0.5} r={4.8} />
                {(i === 0 || i === controlPoints.length - 1) && (
                  <circle cx={x + 0.5} cy={y + 0.5} r={2} fill="#5b8fd6" />
                )}
              </g>
            ))}
          </g>
        </g>
      </svg>
    </main>
  );
}

export default function App() {
  return (
    <div className="flex h-screen flex-col overflow-hidden bg-[#eeeeee] font-['Noto_Sans','Open_Sans',sans-serif] text-[11px] leading-4">
      <Header />
      <Ribbon />
      <QuickBar />
      <div className="flex min-h-0 flex-1 gap-1">
        <ProjectBrowser />
        <ElevationView />
      </div>
    </div>
  );
}
